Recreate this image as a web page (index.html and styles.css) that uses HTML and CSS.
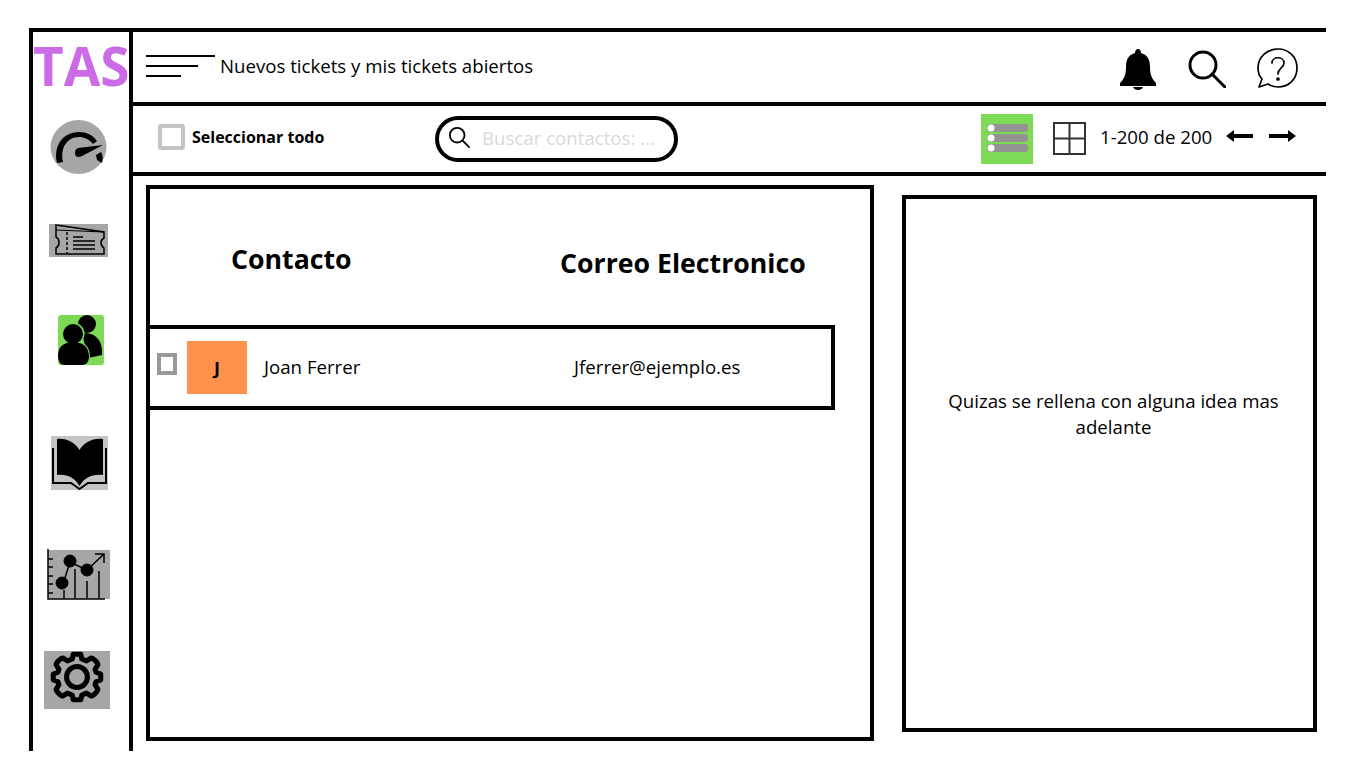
FILE: index.html
```html
<!DOCTYPE html>
<html lang="es">
<head>
    <meta charset="UTF-8">
    <meta name="viewport" content="width=device-width, initial-scale=1.0">
    <title>Contactos</title>
    <link rel="stylesheet" href="styles.css">
</head>
<body>

<div class="app">
    <aside class="sidebar">
        <div class="logo">TAS</div>

        <svg class="nav-icon nav-gauge" width="57" height="54" viewBox="0 0 57 54">
            <ellipse cx="28.500" cy="27" rx="28" ry="27" fill="#a6a6a6"/>
            <path d="M7 43C3 26 13 12 29 12C36 12 43 15 47 21L43 24C39 19 34 17 29 17C17 17 10 28 13 42Z" fill="#000"/>
            <path d="M46 35L51 32C53 36 53 39 52 43L47 40Z" fill="#000"/>
            <path d="M28 28L53 25L32 36C28 38 25 37 25 33C25 30 26 29 28 28Z" fill="#000"/>
        </svg>

        <svg class="nav-icon nav-ticket" width="59" height="33" viewBox="0 0 59 33" fill="none" stroke="#000">
            <rect width="59" height="33" fill="#a6a6a6" stroke="none"/>
            <path d="M7 1L55 8V14C51 16 51 21 55 24V30H7V24C11 22 11 15 7 13Z" stroke-width="1.500"/>
            <path d="M7 6L55 8" stroke-width="1.200"/>
            <path d="M18 8V30" stroke-width="1.500" stroke-dasharray="3 2"/>
            <path d="M24 13H34M24 17H46M24 21H46M24 25H46" stroke-width="1.500"/>
        </svg>

        <svg class="nav-icon nav-people" width="46" height="50" viewBox="0 0 46 50">
            <rect width="46" height="50" rx="3" fill="#7ed957"/>
            <circle cx="29" cy="9" r="9" fill="#000"/>
            <path d="M24 18C38 17 45 26 44 40L30 43Z" fill="#000"/>
            <circle cx="15" cy="19" r="10" fill="#7ed957" stroke="#7ed957" stroke-width="3"/>
            <path d="M0 40C0 32 6 27 15 27C25 27 31 32 31 42C31 47 28 50 24 50H6C2 50 0 46 0 40Z" fill="#7ed957" stroke="#7ed957" stroke-width="2"/>
            <circle cx="15" cy="19" r="10" fill="#000"/>
            <path d="M0 40C0 32 6 27 15 27C25 27 31 32 31 42C31 47 28 50 24 50H6C2 50 0 46 0 40Z" fill="#000"/>
        </svg>

        <svg class="nav-icon nav-book" width="57" height="54" viewBox="0 0 57 54">
            <rect width="57" height="54" fill="#c4c4c4"/>
            <path d="M2 12V47H20L28.500 53L37 47H55V12" fill="none" stroke="#000" stroke-width="2"/>
            <path d="M6 3C16 2 23 6 28.500 14C34 6 41 2 52 3V39C41 38 34 41 28.500 50C23 41 16 38 6 39Z" fill="#000"/>
        </svg>

        <svg class="nav-icon nav-chart" width="63" height="51" viewBox="0 0 63 51" fill="none" stroke="#000">
            <rect x="1" y="1" width="62" height="49" fill="#a6a6a6" stroke="none"/>
            <path d="M1 0V50H58M1 10H6M1 18H6M1 27H6M1 35H6M1 44H6" stroke-width="1.500"/>
            <path d="M16 35L23 13L40 21L57 5M48 5H57V14" stroke-width="1.500"/>
            <path d="M17 41V49M28 20V49M40 32V49M52 22V49" stroke-width="1.500"/>
            <circle cx="15" cy="34" r="6" fill="#000"/>
            <circle cx="23" cy="12" r="6" fill="#000"/>
            <circle cx="40" cy="21" r="6" fill="#000"/>
        </svg>

        <svg class="nav-icon nav-gear" width="66" height="58" viewBox="0 0 66 58" fill="none" stroke="#000" stroke-width="5.300">
            <rect width="66" height="58" fill="#a6a6a6" stroke="none"/>
            <g transform="translate(33 26) scale(.95) translate(-33 -30)">
                <path d="M29 6H37L38 11L43 13L48 10C50 10 55 15 55 17L52 22L53 25L58 27V33L53 35L52 38L55 43C55 45 50 50 48 50L43 47L38 49L37 54H29L28 49L23 47L18 50C16 50 11 45 11 43L14 38L13 35L8 33V27L13 25L14 22L11 17C11 15 16 10 18 10L23 13L28 11Z" stroke-linejoin="round"/>
                <circle cx="33" cy="30" r="11"/>
            </g>
        </svg>
    </aside>

    <div class="workspace">
        <header class="topbar">
            <svg class="menu-lines" width="70" height="24" viewBox="0 0 70 24" stroke="#000" stroke-width="2">
                <path d="M0 2H69M0 12H52M0 22H35"/>
            </svg>
            <div class="topbar-title">Nuevos tickets y mis tickets abiertos</div>
            <div class="topbar-icons">
                <svg class="top-bell" width="36" height="42" viewBox="0 0 36 42">
                    <path d="M18 0C20 0 21 2 21 4C28 6 30 11 30 18C30 26 32 30 36 34V37H0V34C4 30 6 26 6 18C6 11 8 6 15 4C15 2 16 0 18 0Z" fill="#000"/>
                    <path d="M13 38H23C22 42 14 42 13 38Z" fill="#000"/>
                </svg>
                <svg class="top-search" width="38" height="38" viewBox="0 0 38 38" fill="none" stroke="#000" stroke-width="3">
                    <circle cx="15" cy="15" r="13"/>
                    <path d="M24 24L37 37" stroke-linecap="round"/>
                </svg>
                <svg class="top-help" width="41" height="41" viewBox="0 0 41 41" fill="none" stroke="#000" stroke-width="1.700">
                    <path d="M21 1C32 1 40 9 40 20C40 31 32 39 21 39C17 39 14 38 11 36L2 39L5 31C2 28 1 24 1 20C1 9 10 1 21 1Z" stroke-linejoin="round"/>
                    <path d="M15 15C15 8 27 8 27 15C27 20 21 20 21 26" stroke-linecap="round"/>
                    <circle cx="21" cy="31" r="1" fill="#000"/>
                </svg>
            </div>
        </header>

        <div class="toolbar">
            <label class="select-all"><span class="check-big"></span>Seleccionar todo</label>
            <div class="search-box">
                <svg class="search-icon" width="22" height="22" viewBox="0 0 24 24" fill="none" stroke="#000" stroke-width="2">
                    <circle cx="10" cy="10" r="8"/>
                    <path d="M16 16L23 23" stroke-linecap="round"/>
                </svg>
                <span class="search-placeholder">Buscar contactos: ...</span>
            </div>
            <div class="toolbar-right">
                <svg class="view-list" width="52" height="50" viewBox="0 0 52 50">
                    <rect width="52" height="50" fill="#7ed957"/>
                    <rect x="6" y="10" width="41" height="8" rx="3" fill="#939393"/>
                    <rect x="6" y="20" width="41" height="8" rx="3" fill="#939393"/>
                    <rect x="6" y="30" width="41" height="8" rx="3" fill="#939393"/>
                    <circle cx="10" cy="14" r="3.500" fill="#fff"/>
                    <circle cx="10" cy="24" r="3.500" fill="#fff"/>
                    <circle cx="10" cy="34" r="3.500" fill="#fff"/>
                </svg>
                <svg class="view-grid" width="33" height="33" viewBox="0 0 33 33" fill="none" stroke="#333" stroke-width="2">
                    <path d="M1 1H32V32H1ZM16.500 1V32M1 16.500H32"/>
                </svg>
                <span class="pager-text">1-200 de 200</span>
                <svg class="pager-arrow" width="27" height="14" viewBox="0 0 27 14">
                    <path d="M0 7L8 1V5H27V9H8V13Z" fill="#000"/>
                </svg>
                <svg class="pager-arrow next" width="27" height="14" viewBox="0 0 27 14">
                    <path d="M27 7L19 1V5H0V9H19V13Z" fill="#000"/>
                </svg>
            </div>
        </div>

        <div class="content">
            <section class="contacts">
                <div class="contacts-head">
                    <h2 class="col-name">Contacto</h2>
                    <h2 class="col-mail">Correo Electronico</h2>
                </div>
                <div class="contact-row">
                    <span class="check-small"></span>
                    <span class="avatar">J</span>
                    <span class="contact-name">Joan Ferrer</span>
                    <span class="contact-mail">Jferrer@ejemplo.es</span>
                </div>
            </section>
            <section class="side-panel">
                <p>Quizas se rellena con alguna idea mas adelante</p>
            </section>
        </div>
    </div>
</div>

</body>
</html>
```

FILE: styles.css
```css
* {
    box-sizing: border-box;
}
body {
    margin: 0;
    background-color: white;
    color: black;
    font-family: "Open Sans", sans-serif;
}
svg {
    display: block;
    flex-shrink: 0;
}
.app {
    display: flex;
    width: 1297px;
    height: 723px;
    margin: 28px 0 0 29px;
    border-top: 4px solid black;
}

/* barra lateral */
.sidebar {
    display: flex;
    flex-direction: column;
    align-items: flex-start;
    width: 104px;
    border-left: 4px solid black;
    border-right: 4px solid black;
}
.logo {
    height: 64px;
    width: 96px;
    font-size: 53px;
    line-height: 68px;
    font-weight: 700;
    color: #cb6ce6;
    white-space: nowrap;
}
.nav-gauge { margin: 24px 0 0 17px; }
.nav-ticket { margin: 50px 0 0 16px; }
.nav-people { margin: 58px 0 0 25px; }
.nav-book { margin: 71px 0 0 18px; }
.nav-chart { margin: 59px 0 0 14px; }
.nav-gear { margin: 51px 0 0 11px; }

.workspace {
    flex: 1;
    display: flex;
    flex-direction: column;
    min-width: 0;
}

/* barra superior */
.topbar {
    display: flex;
    align-items: center;
    height: 74px;
    padding-left: 13px;
    border-bottom: 4px solid black;
}
.menu-lines {
    margin-top: -2px;
}
.topbar-title {
    margin-left: 4px;
    margin-top: -4px;
    font-size: 18.650px;
}
.topbar-icons {
    display: flex;
    align-items: center;
    margin-left: auto;
    margin-right: 28px;
    margin-top: 2px;
}
.top-bell {
    margin-top: 4px;
}
.top-search {
    margin-left: 32px;
    margin-top: 2px;
}
.top-help {
    margin-left: 31px;
}

/* barra de herramientas */
.toolbar {
    display: flex;
    align-items: center;
    height: 70px;
    padding-left: 25px;
    border-bottom: 4px solid black;
}
.select-all {
    display: flex;
    align-items: center;
    width: 277px;
    margin-top: -5px;
    font-size: 16px;
    font-weight: 700;
}
.check-big {
    width: 27px;
    height: 26px;
    margin-right: 7px;
    border: 4px solid #c4c4c4;
    border-radius: 3px;
}
.search-box {
    display: flex;
    align-items: center;
    width: 243px;
    height: 46px;
    margin-top: -1px;
    padding-left: 9px;
    border: 4px solid black;
    border-radius: 23px;
}
.search-icon {
    margin-bottom: 3px;
}
.search-placeholder {
    margin-left: 12px;
    margin-bottom: 3px;
    font-size: 18.670px;
    color: #d9d9d9;
}
.toolbar-right {
    display: flex;
    align-items: center;
    margin-left: 303px;
    margin-top: -2px;
}
.view-list {
    margin-top: 2px;
}
.view-grid {
    margin-left: 20px;
}
.pager-text {
    margin-left: 14px;
    margin-bottom: 4px;
    font-size: 18.670px;
    white-space: nowrap;
}
.pager-arrow {
    margin-left: 14px;
    margin-bottom: 4px;
}
.pager-arrow.next {
    margin-left: 16px;
}

/* contenido */
.content {
    display: flex;
    align-items: flex-start;
    padding: 9px 0 0 13px;
}
.contacts {
    width: 728px;
    height: 556px;
    border: 4px solid black;
}
.contacts-head {
    display: flex;
    height: 136px;
}
.contacts-head h2 {
    margin: 0;
    font-size: 26.700px;
    font-weight: 700;
}
.contacts-head .col-name {
    margin-top: 51px;
    width: 410px;
    padding-left: 81px;
}
.contacts-head .col-mail {
    margin-top: 55px;
}
.contact-row {
    display: flex;
    align-items: center;
    width: 689px;
    height: 85px;
    margin-left: -4px;
    border: 4px solid black;
    padding: 0 0 2px 7px;
}
.check-small {
    width: 20px;
    height: 22px;
    margin-top: -6px;
    border: 4px solid #999;
}
.avatar {
    display: flex;
    align-items: center;
    justify-content: center;
    width: 60px;
    height: 53px;
    margin-left: 10px;
    margin-top: 2px;
    background-color: #ff914d;
    font-size: 18px;
    font-weight: 700;
}
.contact-name {
    width: 310px;
    margin-left: 17px;
    font-size: 18.670px;
}
.contact-mail {
    font-size: 18.670px;
}
.side-panel {
    display: flex;
    justify-content: center;
    width: 415px;
    height: 537px;
    margin: 10px 0 0 28px;
    border: 4px solid black;
    padding: 189px 20px 0;
}
.side-panel p {
    margin: 0 0 0 8px;
    width: 350px;
    text-align: center;
    font-size: 18.670px;
    line-height: 26px;
}
```
